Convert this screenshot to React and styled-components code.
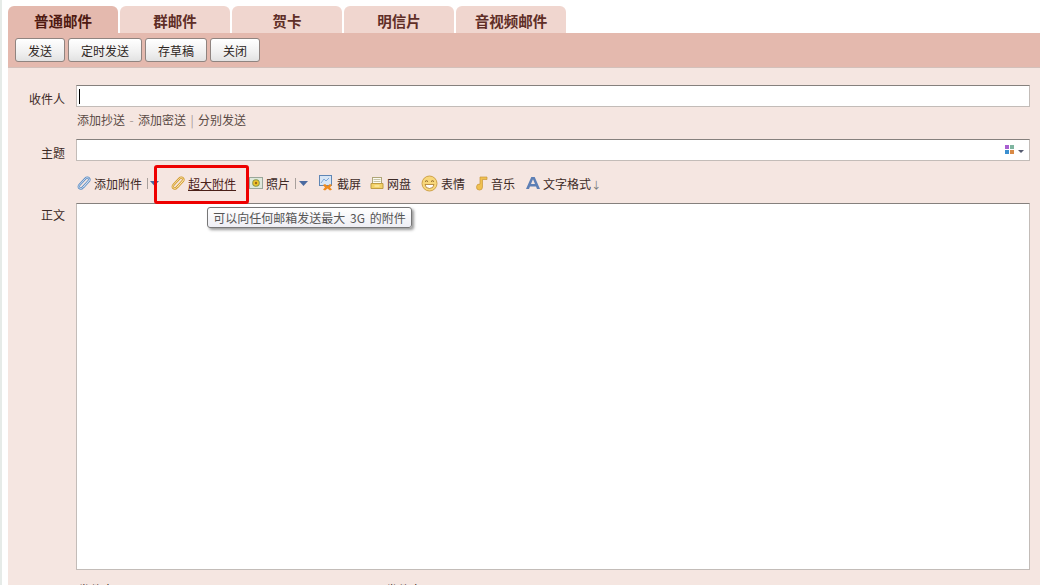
import React from "react";
import styled, { createGlobalStyle } from "styled-components";

const GlobalStyle = createGlobalStyle`
  html, body {
    margin: 0;
    padding: 0;
    height: 100%;
    overflow: hidden;
    background: #fff;
    font-family: "Noto Sans CJK SC", "Liberation Sans", sans-serif;
    font-size: 12px;
    color: #3d2a26;
  }
`;

const Page = styled.div`
  width: 1040px;
  height: 585px;
  overflow: hidden;
  box-sizing: border-box;
  padding: 6px 0 0 6px;
  position: relative;
  border-left: 2px solid #e6ebe8;
`;

const Tabs = styled.div`
  display: flex;
  gap: 2px;
  height: 27px;
`;

const Tab = styled.div`
  width: 110px;
  border-radius: 6px 6px 0 0;
  background: ${(p) => (p.$active ? "#e4b9ae" : "#f0d6cf")};
  color: ${(p) => (p.$active ? "#4f1a12" : "#5f2e27")};
  font-size: 14.5px;
  font-weight: 700;
  line-height: 30px;
  text-align: center;
  white-space: nowrap;
`;

const ActionBar = styled.div`
  display: flex;
  gap: 3px;
  height: 35px;
  box-sizing: border-box;
  padding: 5px 7px 0;
  background: #e4b9ae;
  border-bottom: 1px solid #d3c0ba;
`;

const ActionButton = styled.button`
  width: ${(p) => p.$w}px;
  height: 24px;
  padding: 0;
  border: 1px solid #8f8480;
  border-radius: 3px;
  background: linear-gradient(#ffffff, #f0f0f0 60%, #e2e2e2);
  font: inherit;
  color: #2d2522;
`;

const Main = styled.div`
  height: 517px;
  background: #f5e6e1;
  padding-top: 17px;
`;

const Row = styled.div`
  display: flex;
  align-items: flex-start;
  height: ${(p) => p.$h}px;
`;

const Label = styled.div`
  width: 57px;
  flex: none;
  text-align: right;
  line-height: ${(p) => p.$lh || 28}px;
`;

const Field = styled.div`
  flex: none;
  width: 954px;
  height: 100%;
  margin-left: 11px;
  box-sizing: border-box;
  background: #fff;
  border: 1px solid #c3bcb8;
  border-top-color: #85807d;
  position: relative;
  display: flex;
  align-items: center;
  justify-content: flex-end;
`;

const Caret = styled.span`
  position: absolute;
  left: 2px;
  top: 3px;
  width: 1px;
  height: 15px;
  background: #000;
`;

const LinkRow = styled.div`
  display: flex;
  align-items: center;
  height: 24px;
  margin: 0 0 8px 69px;
  color: #5a4a45;
`;

const Sep = styled.span`
  width: ${(p) => p.$w}px;
  text-align: center;
  color: #a89a95;
`;

const Tools = styled.div`
  display: flex;
  align-items: center;
  box-sizing: border-box;
  height: 42px;
  padding-top: 2px;
  margin-left: 69px;
`;

const Tool = styled.span`
  display: inline-flex;
  align-items: center;
  gap: 3px;
  margin-left: ${(p) => p.$ml || 0}px;
  color: ${(p) => p.$color || "#3d2a26"};
  white-space: nowrap;
`;

const ToolText = styled.span`
  text-decoration: ${(p) => (p.$underline ? "underline" : "none")};
`;

const ToolSep = styled.span`
  width: 1px;
  height: 11px;
  background: #a8a09c;
  margin: 0 ${(p) => p.$mr}px 0 5px;
`;

const Arrow = styled.span`
  font-size: 10px;
  color: #777;
`;

const Highlight = styled.div`
  position: absolute;
  left: 152px;
  top: 165px;
  width: 95px;
  height: 39px;
  box-sizing: border-box;
  border: 3px solid #ee0000;
  border-radius: 3px;
`;

const Tooltip = styled.div`
  position: absolute;
  left: 205px;
  top: 207px;
  width: 205px;
  height: 21px;
  box-sizing: border-box;
  border: 1px solid #777;
  border-radius: 3px;
  background: linear-gradient(#ffffff, #eeeef4);
  box-shadow: 2px 2px 3px rgba(0, 0, 0, 0.4);
  color: #555;
  font-size: 12px;
  word-spacing: 2px;
  line-height: 19px;
  text-align: center;
  white-space: nowrap;
`;

const Footer = styled.div`
  display: flex;
  margin: 12px 0 0 70px;
  line-height: 16px;
`;

const FooterGap = styled.span`
  margin-left: ${(p) => p.$m}px;
`;

const Triangle = () => (
  <svg width="9" height="5" viewBox="0 0 9 5">
    <path d="M0 0h9L4.5 5z" fill="#4a6aa0" />
  </svg>
);

const clipPath =
  "M12 4.5 5.6 11.6c-1 1.1-2.4 1.2-3.2.4-.9-.8-.8-2.1.2-3.2l5.8-6.3c1.5-1.6 3.3-.5 3.7.1.5.8.4 1.8-.4 2.7L6.5 11";

const ClipIcon = ({ color, edge }) => (
  <svg width="14" height="15" viewBox="0 0 14 15">
    <path d={clipPath} fill="none" stroke={edge} strokeWidth="2.4" strokeLinecap="round" />
    <path d={clipPath} fill="none" stroke={color} strokeWidth="0.8" strokeLinecap="round" />
  </svg>
);

const PhotoIcon = () => (
  <svg width="14" height="14" viewBox="0 0 14 14">
    <rect x="0.5" y="1.5" width="13" height="11" fill="#dfe8dc" stroke="#9aa79a" />
    <circle cx="7" cy="7" r="3.8" fill="#8a9a4a" />
    <circle cx="7" cy="7" r="2.8" fill="#f2c428" />
    <circle cx="7" cy="7" r="1.2" fill="#9a6a18" />
  </svg>
);

const ShotIcon = () => (
  <svg width="15" height="16" viewBox="0 0 15 16">
    <rect x="0.5" y="0.5" width="12" height="10" fill="#d8e6f5" stroke="#5f86b5" />
    <path d="M2 8l3-4 2 2 3-3" fill="none" stroke="#7fa8d8" />
    <path d="M6 9l2.5 2L11 9l2 1-2 2.5 2 2-2 1-2.500-2-2.500 2-2-1 2-2-2-2.500z" fill="#ee8a1e" />
  </svg>
);

const DiskIcon = () => (
  <svg width="14" height="14" viewBox="0 0 14 14">
    <rect x="2.5" y="1.5" width="9" height="6" fill="#fbfbf2" stroke="#b0a678" />
    <path d="M3.5 3.5h7M3.5 5.500h7" stroke="#c8c4a8" />
    <path d="M1 7.5h12v5H1z" fill="#f3d267" stroke="#c09d45" />
    <path d="M4.5 10h5" stroke="#fff6c8" />
  </svg>
);

const SmileIcon = () => (
  <svg width="17" height="17" viewBox="0 0 17 17">
    <circle cx="8.5" cy="8.5" r="7.5" fill="#f8d77a" stroke="#cfa24a" />
    <path d="M4 6.500q1.500-1.500 3 0M10 6.500q1.500-1.500 3 0" fill="none" stroke="#8a6122" />
    <path d="M4 9.500h9q-.5 4-4.500 4T4 9.500z" fill="#fff" stroke="#a9772a" strokeWidth="0.8" />
  </svg>
);

const MusicIcon = () => (
  <svg width="14" height="16" viewBox="0 0 14 16">
    <path d="M6 2h7v2.500H8.500V12a3 3 0 1 1-2.500-2.900z" fill="#f0c050" stroke="#c9973a" strokeWidth="0.7" />
  </svg>
);

const FontIcon = () => (
  <svg width="14" height="14" viewBox="0 0 14 14">
    <path d="M5.300 1h3.400L14 13h-3l-1-2.600H4L3 13H0zM5 8h4L7 3.200z" fill="#5d7fb5" />
  </svg>
);

const PaletteIcon = () => (
  <svg width="19" height="10" viewBox="0 0 19 10" style={{ marginRight: 5 }}>
    <rect x="0" y="0" width="4" height="4" fill="#a85fd0" />
    <rect x="5" y="0" width="4" height="4" fill="#7fb5a0" />
    <rect x="0" y="5" width="4" height="4" fill="#3a8fd0" />
    <rect x="5" y="5" width="4" height="4" fill="#d98a45" />
    <path d="M13 5h6l-3 3z" fill="#555a70" />
  </svg>
);

const tabs = ["普通邮件", "群邮件", "贺卡", "明信片", "音视频邮件"];
const actions = [
  ["发送", 50],
  ["定时发送", 74],
  ["存草稿", 62],
  ["关闭", 50],
];

export default function App() {
  return (
    <Page>
      <GlobalStyle />
      <Tabs>
        {tabs.map((t, i) => (
          <Tab key={t} $active={i === 0}>
            {t}
          </Tab>
        ))}
      </Tabs>
      <ActionBar>
        {actions.map(([t, w]) => (
          <ActionButton key={t} $w={w}>
            {t}
          </ActionButton>
        ))}
      </ActionBar>
      <Main>
        <Row $h={22}>
          <Label>收件人</Label>
          <Field>
            <Caret />
          </Field>
        </Row>
        <LinkRow>
          添加抄送
          <Sep $w={13}>-</Sep>
          添加密送
          <Sep $w={12}>|</Sep>
          分别发送
        </LinkRow>
        <Row $h={22}>
          <Label>主题</Label>
          <Field>
            <PaletteIcon />
          </Field>
        </Row>
        <Tools>
          <Tool>
            <ClipIcon color="#dfeaf5" edge="#5f8fc5" />
            添加附件
          </Tool>
          <ToolSep $mr={2} />
          <Triangle />
          <Tool $ml={12} $color="#4a2018">
            <ClipIcon color="#fbeec0" edge="#d39a2c" />
            <ToolText $underline>超大附件</ToolText>
          </Tool>
          <Tool $ml={13}>
            <PhotoIcon />
            照片
          </Tool>
          <ToolSep $mr={3} />
          <Triangle />
          <Tool $ml={11}>
            <ShotIcon />
            截屏
          </Tool>
          <Tool $ml={9}>
            <DiskIcon />
            网盘
          </Tool>
          <Tool $ml={10}>
            <SmileIcon />
            表情
          </Tool>
          <Tool $ml={9}>
            <MusicIcon />
            音乐
          </Tool>
          <Tool $ml={11}>
            <FontIcon />
            <span>
              文字格式<Arrow>↓</Arrow>
            </span>
          </Tool>
        </Tools>
        <Row $h={367}>
          <Label $lh={24}>正文</Label>
          <Field />
        </Row>
        <Footer>
          发件人
          <FooterGap $m={34}>M</FooterGap>
          <FooterGap $m={228}>发件人</FooterGap>
        </Footer>
      </Main>
      <Highlight />
      <Tooltip>可以向任何邮箱发送最大 3G 的附件</Tooltip>
    </Page>
  );
}
